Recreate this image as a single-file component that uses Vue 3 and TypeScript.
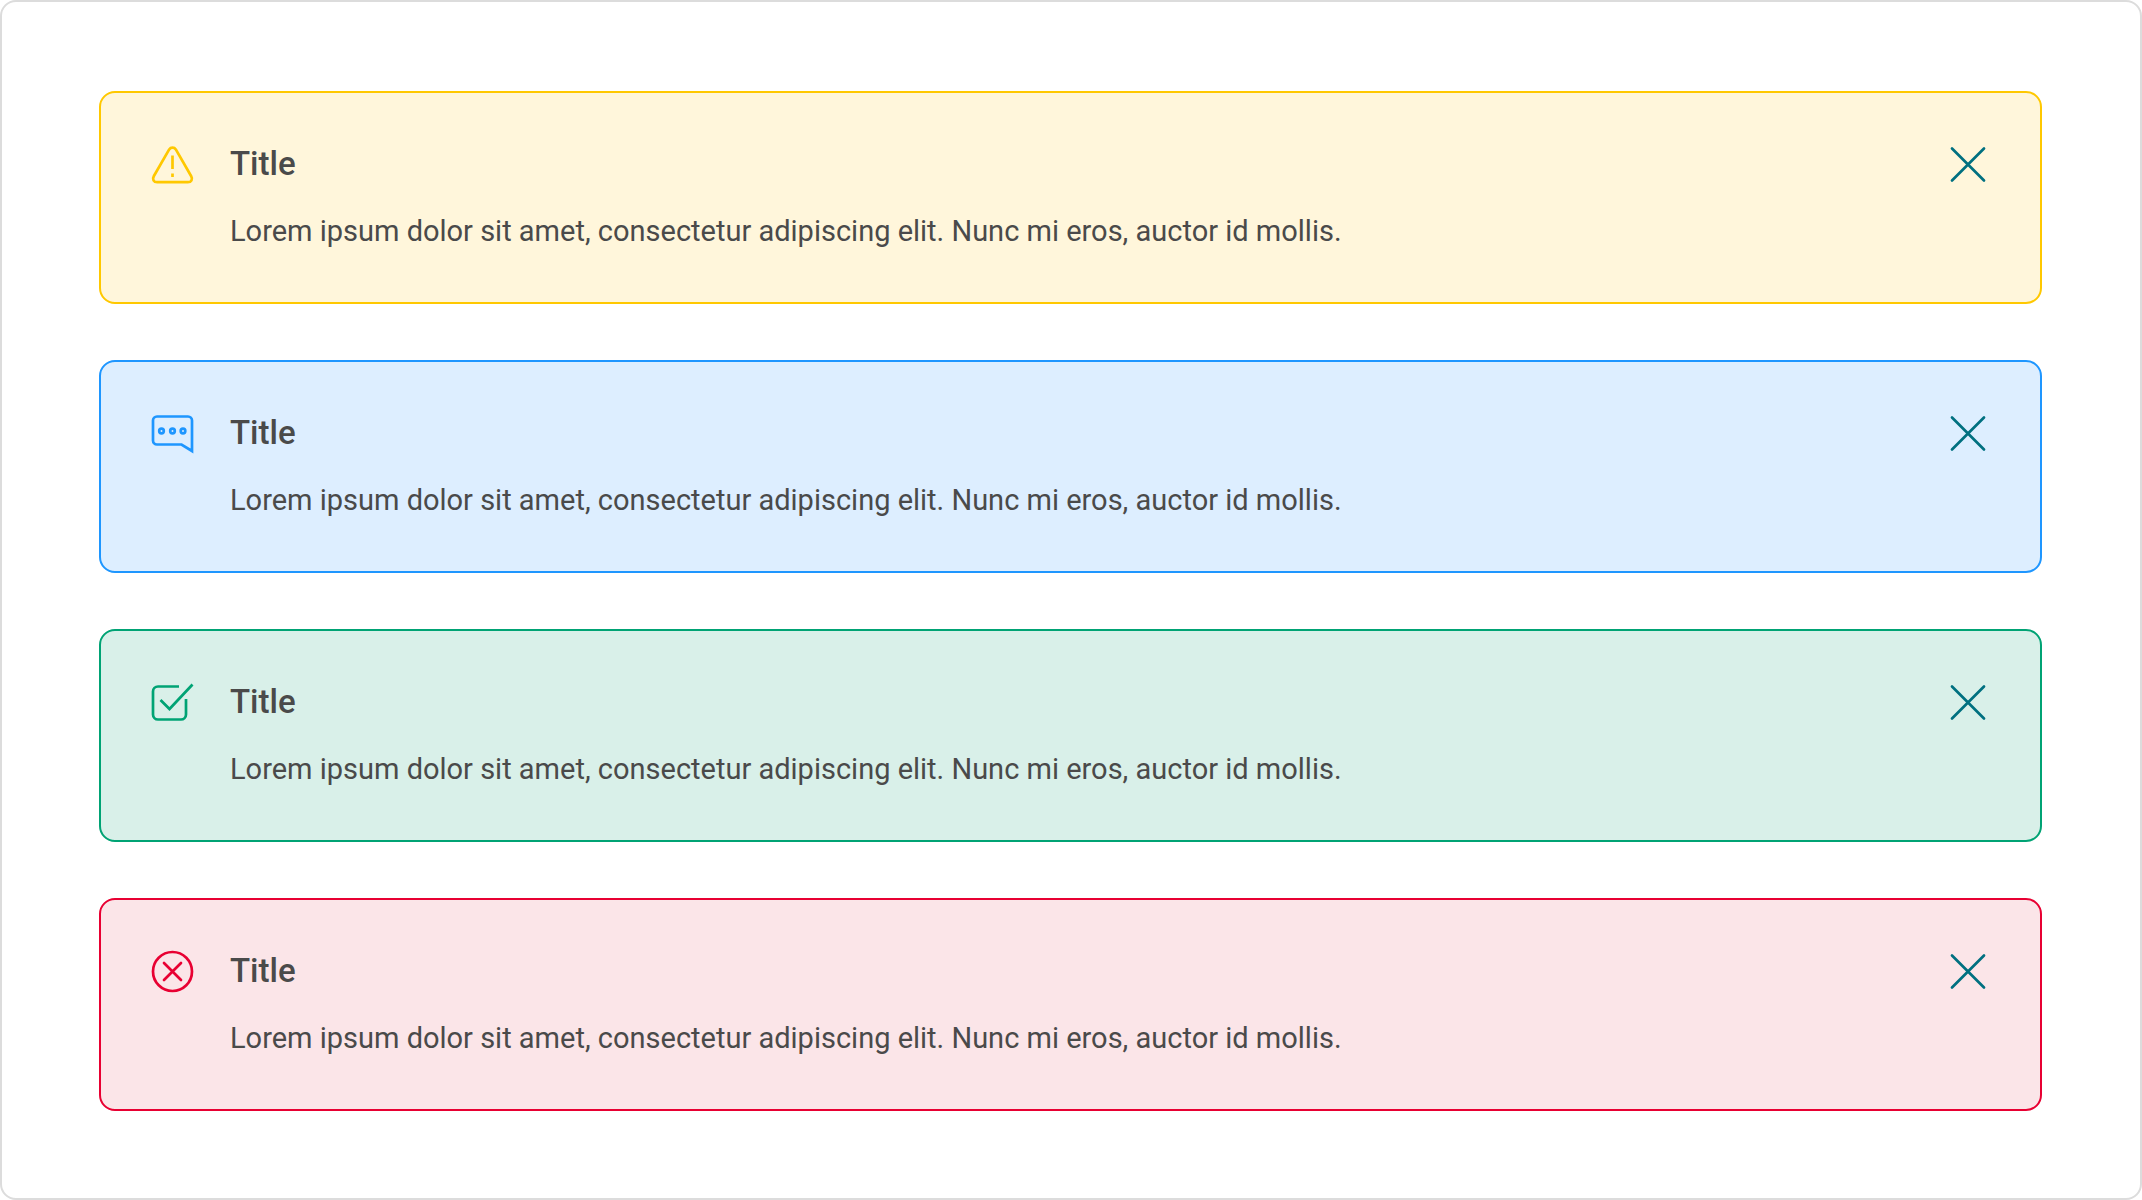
<script setup lang="ts">
import { ref } from 'vue'

type Kind = 'warning' | 'info' | 'success' | 'error'

interface Notice {
  kind: Kind
  title: string
  text: string
}

const body = 'Lorem ipsum dolor sit amet, consectetur adipiscing elit. Nunc mi eros, auctor id mollis.'

const notices = ref<Notice[]>([
  { kind: 'warning', title: 'Title', text: body },
  { kind: 'info', title: 'Title', text: body },
  { kind: 'success', title: 'Title', text: body },
  { kind: 'error', title: 'Title', text: body },
])

function dismiss(kind: Kind): void {
  notices.value = notices.value.filter((n) => n.kind !== kind)
}
</script>

<template>
  <main class="frame">
    <section v-for="n in notices" :key="n.kind" class="notice" :class="n.kind">
      <svg class="icon" viewBox="0 0 48 48" aria-hidden="true">
        <template v-if="n.kind === 'warning'">
          <path d="M20.2 9.4 L4.9 36 C3 39.2 4.6 42.2 8.2 42.2 H38.8 C42.4 42.2 44 39.2 42.1 36 L26.8 9.4 C25.2 7 21.8 7 20.2 9.4 Z" />
          <path class="flat" d="M23.5 15.5 V29 M23.5 33.5 V37" />
        </template>
        <template v-else-if="n.kind === 'info'">
          <path class="flat" d="M43 42 V11.5 A4 4 0 0 0 39 7.5 H8 A4 4 0 0 0 4 11.5 V31.5 A4 4 0 0 0 8 35.5 H32.5 Z" />
          <circle cx="12.5" cy="22" r="2.3" />
          <circle cx="23.5" cy="22" r="2.3" />
          <circle cx="34" cy="22" r="2.3" />
        </template>
        <template v-else-if="n.kind === 'success'">
          <path class="flat" d="M30 8.5 H9 A5 5 0 0 0 4 13.5 V36.5 A5 5 0 0 0 9 41.5 H32 A5 5 0 0 0 37 36.5 V21" />
          <path class="flat" d="M11.5 22 L20.5 31 L43.5 6.5" />
        </template>
        <template v-else>
          <circle cx="23.5" cy="24.5" r="19.5" />
          <path d="M15 16 L32 33 M32 16 L15 33" />
        </template>
      </svg>
      <div class="content">
        <h2 class="title">{{ n.title }}</h2>
        <p class="text">{{ n.text }}</p>
      </div>
      <button class="close" type="button" aria-label="Close" @click="dismiss(n.kind)">
        <svg viewBox="0 0 48 48" aria-hidden="true">
          <path d="M8 8.5 L40 40.5 M40 8.5 L8 40.5" />
        </svg>
      </button>
    </section>
  </main>
</template>

<style>
body {
  margin: 0;
  background: #fff;
}
</style>

<style scoped>
.frame {
  box-sizing: border-box;
  min-height: 100vh;
  padding: 89px 98px 87px 97px;
  border: 2px solid #dcdcdc;
  border-radius: 16px;
  display: flex;
  flex-direction: column;
  gap: 56px;
  font-family: Roboto, sans-serif;
  color: #4a4a4a;
}

.notice {
  display: flex;
  align-items: flex-start;
  padding: 47px 48px 51px 48px;
  border: 2px solid var(--tone);
  border-radius: 16px;
  background: var(--fill);
}

.warning {
  --tone: #ffc800;
  --fill: #fff6db;
}

.info {
  --tone: #1e96ff;
  --fill: #ddeeff;
}

.success {
  --tone: #00a374;
  --fill: #d9f0e9;
}

.error {
  --tone: #e80032;
  --fill: #fbe5e8;
}

.icon {
  flex: none;
  width: 48px;
  height: 48px;
  margin-right: 33px;
  fill: none;
  stroke: var(--tone);
  stroke-width: 2.7;
  stroke-linecap: round;
  stroke-linejoin: round;
}

.flat {
  stroke-linecap: butt;
  stroke-linejoin: miter;
}

.content {
  flex: 1;
  min-width: 0;
}

.title {
  margin: 0 0 23px;
  font-size: 33px;
  line-height: 48px;
  font-weight: 500;
}

.text {
  margin: 0;
  font-size: 29px;
  line-height: 40px;
}

.close {
  flex: none;
  width: 48px;
  height: 48px;
  padding: 0;
  border: 0;
  background: none;
  cursor: pointer;
}

.close svg {
  display: block;
  width: 48px;
  height: 48px;
  fill: none;
  stroke: #007080;
  stroke-width: 2.7;
  stroke-linecap: round;
}
</style>
